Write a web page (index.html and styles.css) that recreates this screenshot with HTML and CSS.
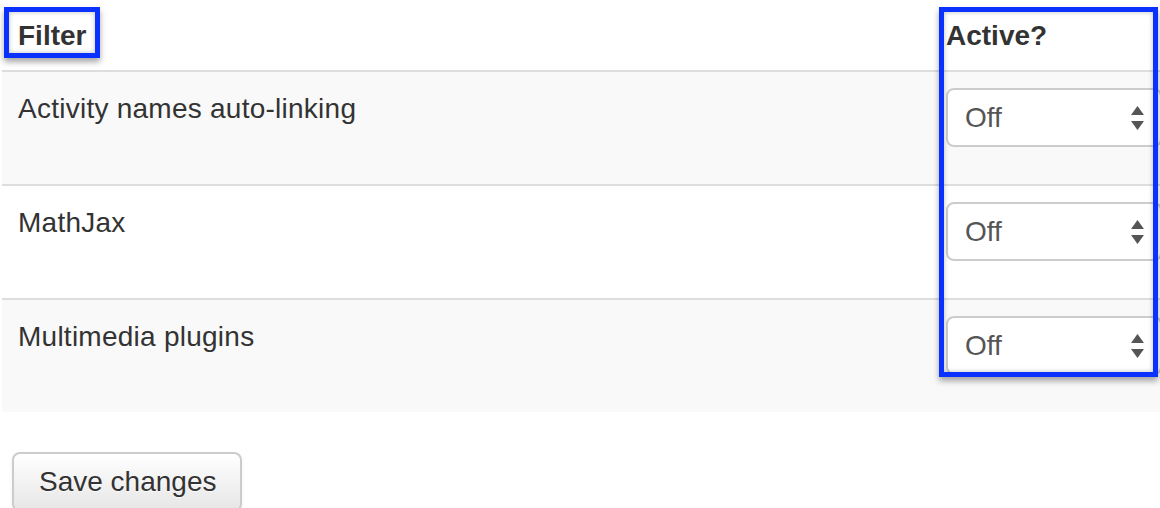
FILE: index.html
```html
<!DOCTYPE html>
<html>
<head>
<meta charset="utf-8">
<link rel="stylesheet" href="styles.css">
</head>
<body>
<div class="page">
  <div class="table">
    <div class="row head">
      <div class="cell">Filter</div>
      <div class="cell">Active?</div>
    </div>
    <div class="row odd">
      <div class="cell name">Activity names auto-linking</div>
      <div class="cell"><div class="select"><span>Off</span><svg class="arrows" width="13" height="24" viewBox="0 0 13 24"><polygon points="0,9 6.5,0 13,9" fill="#555"/><polygon points="0,15 13,15 6.5,24" fill="#555"/></svg></div></div>
    </div>
    <div class="row">
      <div class="cell name">MathJax</div>
      <div class="cell"><div class="select"><span>Off</span><svg class="arrows" width="13" height="24" viewBox="0 0 13 24"><polygon points="0,9 6.5,0 13,9" fill="#555"/><polygon points="0,15 13,15 6.5,24" fill="#555"/></svg></div></div>
    </div>
    <div class="row odd">
      <div class="cell name">Multimedia plugins</div>
      <div class="cell"><div class="select"><span>Off</span><svg class="arrows" width="13" height="24" viewBox="0 0 13 24"><polygon points="0,9 6.5,0 13,9" fill="#555"/><polygon points="0,15 13,15 6.5,24" fill="#555"/></svg></div></div>
    </div>
  </div>
  <div class="actions">
    <button class="btn">Save changes</button>
  </div>
</div>
<div class="hl hl-filter"></div>
<div class="hl hl-active"></div>
</body>
</html>
```

FILE: styles.css
```css
html, body {
  margin: 0;
  padding: 0;
  overflow: hidden;
  background: #fff;
}
body {
  font-family: "Liberation Sans", Arial, sans-serif;
  font-size: 28px;
  line-height: 40px;
  color: #333;
  width: 1160px;
  height: 508px;
  position: relative;
}
.page {
  padding-left: 2px;
}
.table {
  width: 1190px;
  margin-bottom: 40px;
}
.row {
  display: grid;
  grid-template-columns: 928px 262px;
  border-top: 2px solid #ddd;
}
.row.head {
  border-top: none;
  font-weight: bold;
}
.row.head .cell {
  padding: 16px 16px 14px 16px;
}
.row.odd {
  background: #f9f9f9;
}
.cell {
  padding: 16px 16px 17px 16px;
}
.cell.name {
  padding-top: 17px;
  padding-bottom: 16px;
  letter-spacing: 0.25px;
}
.select {
  box-sizing: border-box;
  width: 216px;
  height: 59px;
  margin-bottom: 20px;
  border: 2px solid #ccc;
  border-radius: 8px;
  background: #fff;
  color: #555;
  display: flex;
  align-items: center;
  justify-content: space-between;
  padding: 0 16px 0 17px;
}
.arrows {
  display: block;
}
.actions {
  padding-left: 10px;
}
.btn {
  box-sizing: border-box;
  font-family: "Liberation Sans", Arial, sans-serif;
  font-size: 28px;
  line-height: 40px;
  color: #333;
  height: 60px;
  padding: 8px 24px 8px 25px;
  border: 2px solid #ccc;
  border-bottom-color: #b3b3b3;
  border-radius: 8px;
  background: linear-gradient(to bottom, #ffffff, #e6e6e6);
  text-shadow: 0 1px 1px rgba(255,255,255,0.75);
  box-shadow: inset 0 2px 0 rgba(255,255,255,0.2), 0 2px 4px rgba(0,0,0,0.05);
  margin: 0;
}
.hl {
  position: absolute;
  box-sizing: border-box;
  border: 5px solid #0b31ff;
  box-shadow: 0 4px 6px rgba(0,0,0,0.35), inset 0 0 5px rgba(0,0,0,0.25);
  pointer-events: none;
}
.hl-filter {
  left: 4px;
  top: 7px;
  width: 96px;
  height: 51px;
}
.hl-active {
  left: 939px;
  top: 7px;
  width: 219px;
  height: 370px;
}
```
